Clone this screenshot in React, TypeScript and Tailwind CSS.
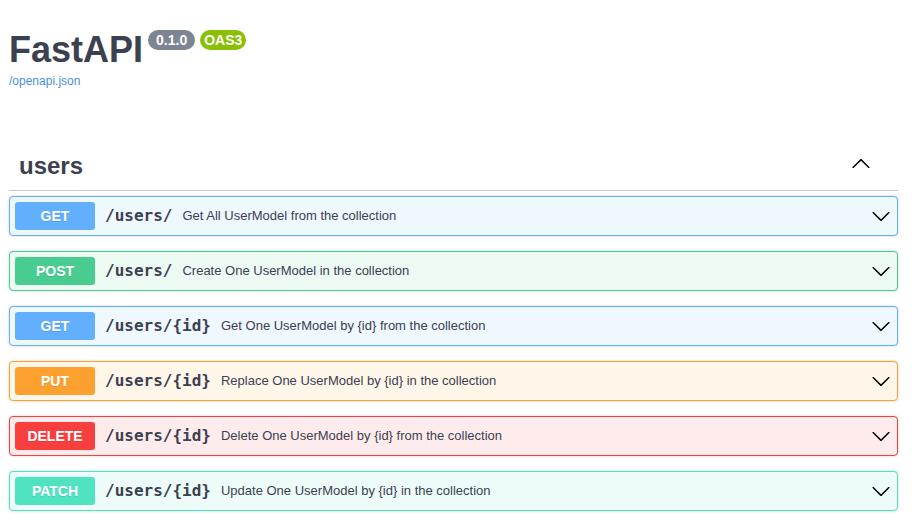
import React from "react";

const ARROW =
  "M17.418 6.109c.272-.268.709-.268.979 0s.271.701 0 .969l-7.908 7.83c-.27.268-.707.268-.979 0l-7.908-7.83c-.27-.268-.27-.701 0-.969.271-.268.709-.268.979 0L10 13.25l7.418-7.141z";

function Arrow({ up = false, className = "" }: { up?: boolean; className?: string }) {
  return (
    <svg
      width="20"
      height="20"
      viewBox="0 0 20 20"
      className={className}
      style={up ? { transform: "rotate(180deg)" } : undefined}
    >
      <path d={ARROW} fill="#000" />
    </svg>
  );
}

type Op = {
  method: string;
  path: string;
  desc: string;
  row: string;
  badge: string;
};

const ops: Op[] = [
  { method: "GET", path: "/users/", desc: "Get All UserModel from the collection", row: "bg-[#eff7ff] border-[#61affe]", badge: "bg-[#61affe]" },
  { method: "POST", path: "/users/", desc: "Create One UserModel in the collection", row: "bg-[#edfaf4] border-[#49cc90]", badge: "bg-[#49cc90]" },
  { method: "GET", path: "/users/{id}", desc: "Get One UserModel by {id} from the collection", row: "bg-[#eff7ff] border-[#61affe]", badge: "bg-[#61affe]" },
  { method: "PUT", path: "/users/{id}", desc: "Replace One UserModel by {id} in the collection", row: "bg-[#fff6ea] border-[#fca130]", badge: "bg-[#fca130]" },
  { method: "DELETE", path: "/users/{id}", desc: "Delete One UserModel by {id} from the collection", row: "bg-[#feecec] border-[#f93e3e]", badge: "bg-[#f93e3e]" },
  { method: "PATCH", path: "/users/{id}", desc: "Update One UserModel by {id} in the collection", row: "bg-[#eefcf9] border-[#50e3c2]", badge: "bg-[#50e3c2]" },
];

export default function App() {
  return (
    <div className="min-h-[520px] bg-white pl-[9px] pr-[14px] font-['Liberation_Sans',Arial,sans-serif] text-[#3b4151]">
      <div className="flex items-start pt-[30px]">
        <h1 className="text-[36px] font-bold leading-[40px] text-[#3b4151]">FastAPI</h1>
        <span className="ml-[5px] h-[20px] rounded-full bg-[#7d8492] px-[8px] text-[14px] font-bold leading-[20px] text-white">
          0.1.0
        </span>
        <span className="ml-[5px] h-[20px] rounded-full bg-[#89bf04] px-[4px] text-[14px] font-bold leading-[20px] text-white">
          OAS3
        </span>
      </div>
      <a className="mt-[4px] block text-[12px] leading-[14px] text-[#4990e2]">/openapi.json</a>

      <div className="mt-[54px] mb-[5px] flex h-[49px] items-center border-b border-[rgba(59,65,81,0.3)] pl-[10px] pr-[27px]">
        <span className="text-[24px] font-bold leading-[28px]">users</span>
        <Arrow up className="ml-auto mb-[5px]" />
      </div>

      <div className="flex flex-col gap-[15px]">
        {ops.map((op, i) => (
          <div
            key={i}
            className={`flex h-[40px] items-center rounded-[4px] border px-[5px] shadow-[0_0_3px_rgba(0,0,0,0.19)] ${op.row}`}
          >
            <span
              className={`flex h-[28px] w-[80px] shrink-0 items-center justify-center rounded-[3px] text-[14px] font-bold text-white [text-shadow:0_1px_0_rgba(0,0,0,0.1)] ${op.badge}`}
            >
              {op.method}
            </span>
            <span className="px-[10px] font-['DejaVu_Sans_Mono',monospace] text-[16px] font-bold text-[#3b4151]">
              {op.path}
            </span>
            <span className="text-[13px] text-[#3b4151]">{op.desc}</span>
            <Arrow className="ml-auto mr-[1px]" />
          </div>
        ))}
      </div>
    </div>
  );
}
